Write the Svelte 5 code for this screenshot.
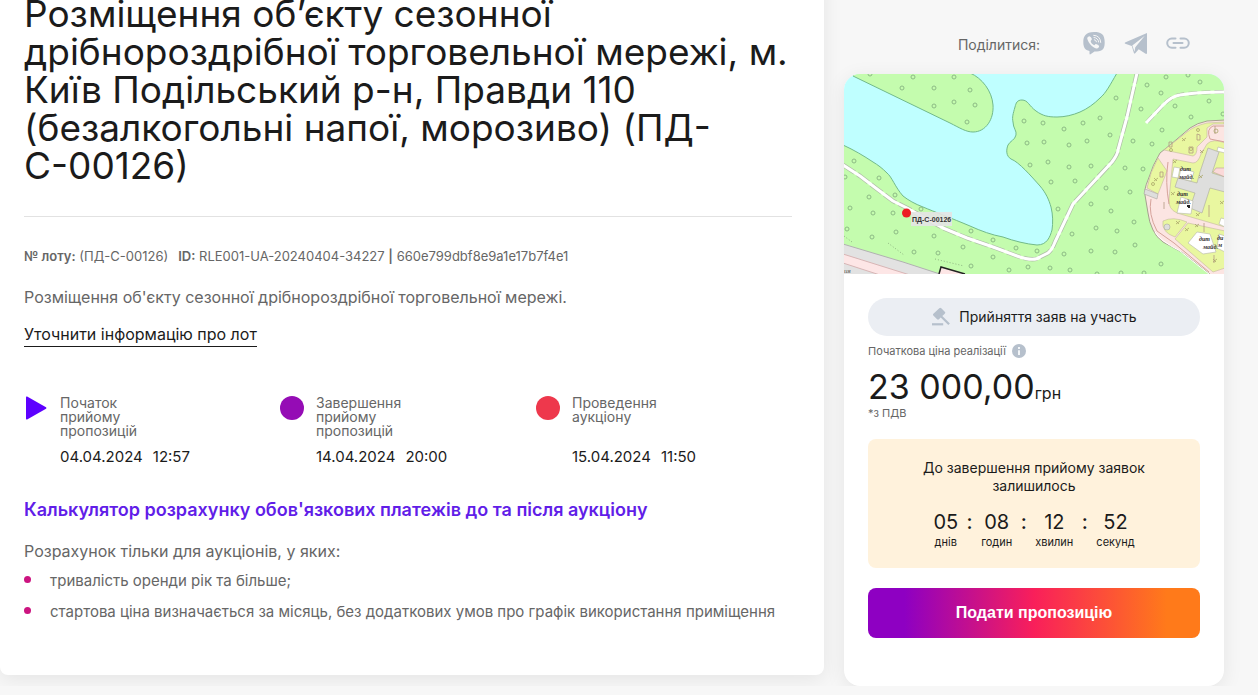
<script>
  const stages = [
    { shape: 'play', color: '#5d00ff', label: 'Початок прийому пропозицій', date: '04.04.2024', time: '12:57' },
    { shape: 'dot', color: '#950cb5', label: 'Завершення прийому пропозицій', date: '14.04.2024', time: '20:00' },
    { shape: 'dot', color: '#ee384c', label: 'Проведення аукціону', date: '15.04.2024', time: '11:50' }
  ];

  const conditions = [
    'тривалість оренди рік та більше;',
    'стартова ціна визначається за місяць, без додаткових умов про графік використання приміщення'
  ];

  const countdown = [
    { value: '05', unit: 'днів' },
    { value: '08', unit: 'годин' },
    { value: '12', unit: 'хвилин' },
    { value: '52', unit: 'секунд' }
  ];

  // Tree symbols on the map, in map units
  const trees = [
    [26, 0], [69, 3], [110, 3], [58, 14], [90, 14], [126, 16], [90, 32], [110, 28], [131, 31], [123, 48],
    [180, 47], [183, 69], [186, 91], [10, 87], [1, 103], [35, 104], [25, 123], [51, 121], [6, 134], [29, 139],
    [49, 139], [77, 135], [3, 155], [28, 163], [52, 158], [90, 162], [127, 157], [149, 166], [119, 173],
    [172, 174], [149, 183], [70, 178], [94, 179], [127, 192], [165, 196], [184, 193], [193, 177],
    [322, 3], [344, 1], [303, 11], [356, 8], [317, 19], [272, 24], [297, 35], [331, 32], [365, 27], [347, 43],
    [379, 40], [256, 44], [199, 49], [239, 49], [220, 55], [318, 56], [266, 61], [243, 67], [200, 68],
    [225, 71], [289, 67], [308, 70], [204, 88], [225, 93], [247, 92], [281, 94], [299, 95], [207, 108],
    [231, 107], [262, 114], [286, 118], [214, 135], [247, 130], [267, 137], [290, 148], [228, 160],
    [252, 154], [273, 157], [291, 171], [220, 180], [247, 177], [271, 178], [317, 190], [206, 194],
    [226, 196], [253, 200], [277, 199], [300, 199]
  ];

  const shrubs = [
    [340, 66], [331, 88], [358, 78], [312, 106], [357, 103], [329, 120], [354, 141], [334, 149],
    [343, 156], [371, 187], [378, 129], [353, 152]
  ];
</script>

<div class="page">
  <main class="lot">
    <h1>Розміщення об’єкту сезонної дрібнороздрібної торговельної мережі, м. Київ Подільський р-н, Правди 110 (безалкогольні напої, морозиво) (ПД-С-00126)</h1>

    <p class="ids">
      <span><b>№ лоту:</b> (ПД-С-00126)</span>
      <span><b>ID:</b> RLE001-UA-20240404-34227 <b>|</b> 660e799dbf8e9a1e17b7f4e1</span>
    </p>
    <p class="summary">Розміщення об'єкту сезонної дрібнороздрібної торговельної мережі.</p>
    <a class="ask" href="#ask">Уточнити інформацію про лот</a>

    <ul class="stages">
      {#each stages as stage}
        <li>
          <svg width="24" height="24" viewBox="0 0 24 24" aria-hidden="true">
            {#if stage.shape === 'play'}
              <path d="M2 1.2Q2 0 3.1.6L22 11.2Q23 12 22 12.8L3.1 23.4Q2 24 2 22.8Z" fill={stage.color} />
            {:else}
              <circle cx="12" cy="12" r="12" fill={stage.color} />
            {/if}
          </svg>
          <div class="stage-text">
            <span class="stage-label">{stage.label}</span>
            <span class="stage-date"><span>{stage.date}</span><span>{stage.time}</span></span>
          </div>
        </li>
      {/each}
    </ul>

    <a class="calculator" href="#calculator">Калькулятор розрахунку обов'язкових платежів до та після аукціону</a>
    <p class="conditions-title">Розрахунок тільки для аукціонів, у яких:</p>
    <ul class="conditions">
      {#each conditions as condition}
        <li>{condition}</li>
      {/each}
    </ul>
  </main>

  <aside>
    <div class="share">
      <span>Поділитися:</span>
      <a href="#viber" aria-label="Viber">
        <svg width="24" height="24" viewBox="0 0 24 24">
          <path d="M12 1C19.500 1 22.700 3.300 22.700 11.500S19 20.500 12.500 20.600L8.500 23.300Q7.500 23.800 7.500 22.500V20.100C3 19 1.300 16.500 1.300 11S3.500 1 12 1Z" fill="#b6c0cc" />
          <path d="M6.300 5.700C7.500 4.600 8.200 5.200 9.400 7.100C10.200 8.300 9.900 8.800 8.800 9.700C8.300 11.100 10.600 13.900 12.500 14.200C13.300 13 14 12.700 15.300 13.600C17.200 14.800 17.600 15.400 16.600 16.600C15.300 18 14.200 17.700 12 16.400C8.800 14.500 6.700 11.900 5.600 8.700C5 7 5.200 6.600 6.300 5.700Z" fill="#f7f7f7" />
          <path d="M11.700 4.300Q18.300 4.600 18.700 11.400M12 6.500Q16.300 6.900 16.600 11M12.300 8.700Q14.300 8.800 14.500 10.800" fill="none" stroke="#f7f7f7" stroke-width="1" stroke-linecap="round" />
        </svg>
      </a>
      <a href="#telegram" aria-label="Telegram">
        <svg width="24" height="24" viewBox="0 0 24 24">
          <path d="M1 11.500L23 2V22Q22.800 23.500 21.200 22.600L14.700 18.300L11.200 22.300Q10.200 23 9.800 21.700L7.800 15L1.300 12.700Q.2 12.200 1 11.500Z" fill="#b6c0cc" />
          <path d="M8.300 14.600L20.800 4.700L11.300 16.300L10.500 20.800Z" fill="#f7f7f7" />
        </svg>
      </a>
      <a href="#copy" aria-label="Копіювати посилання">
        <svg width="24" height="24" viewBox="0 0 24 24" fill="none" stroke="#b6c0cc" stroke-width="2" stroke-linecap="round">
          <path d="M9.500 7.500H5.800a4.600 4.600 0 0 0 0 9.200H9.500M14.500 7.500h3.700a4.600 4.600 0 0 1 0 9.200H14.500M7.500 12.100h9" />
        </svg>
      </a>
    </div>

    <section class="card">
      <svg class="map" viewBox="0 0 380 200" preserveAspectRatio="xMidYMid slice" role="img" aria-label="Розташування лоту на мапі">
        <rect width="380" height="200" fill="#bfffff" />
        <g fill="#c4fcae" stroke="#72b98a" stroke-width="1">
          <path d="M9 -1V2L106 49C116 54 122 58 129 58C142 58 150 45 149 31C148 17 138 4 126 -1Z" />
          <path d="M273 -1C266 11 262 19 256 24C250 30 243 35 236 38C229 41 221 43 213 43C204 43 199 42 192 37C185 32 184 26 178 26C173 26 172 29 171 33C169 40 168 43 169 48C169 54 173 57 172 61C171 66 166 67 164 71C162 76 162 82 167 85C175 88 187 102 196 112C202 119 205 126 207 133C209 141 209 149 208 156C206 163 203 171 193 171C182 170 170 167 159 163C148 161 137 157 126 152C107 144 91 138 79 133C71 130 64 126 59 122C51 113 48 103 43 99C38 94 34 91 29 88C20 82 10 76 -1 71V201H381V-1Z" />
        </g>

        <g fill="none" stroke-linejoin="round">
          <path d="M-1 91L16 102L33 115L49 127L63 134L99 154L123 164L149 173L173 182Q190 188 196 183L204 179Q208 176 211 168L229 130L268 88Q274 80 274 76L283 43L293 -1" stroke="#b0bfa8" stroke-width="4.500" stroke-dasharray="14 3" />
          <path d="M303 48L319 31Q328 22 336 21Q353 18 380 18" stroke="#b0bfa8" stroke-width="4" stroke-dasharray="9 4" />
          <path d="M-1 91L16 102L33 115L49 127L63 134L99 154L123 164L149 173L173 182Q190 188 196 183L204 179Q208 176 211 168L229 130L268 88Q274 80 274 76L283 43L293 -1" stroke="#fff" stroke-width="3" />
          <path d="M302 49L319 31Q328 22 336 21Q353 18 381 18" stroke="#fff" stroke-width="3" />
        </g>

        <g fill="none" stroke="#8dbb85" stroke-width="1">
          {#each trees as [x, y]}
            <circle cx={x} cy={y} r="2" />
          {/each}
        </g>

        <path d="M-1 170L19 176L59 188L99 201H-1Z" fill="#e2e2e2" stroke="#b1b1b1" stroke-width="1" />
        <path d="M-1 180L66 201H36L-1 189Z" fill="#fde6e6" stroke="#d7b5b5" stroke-width="1" />
        <path d="M95 200L97 193L121 200" fill="#fde6e6" stroke="#222" stroke-width="1.500" />
        <path d="M44 169L60 181M91 185L120 192M0 162L8 168" stroke="#8fb582" stroke-width="1" stroke-dasharray="1 2" />
        <text x="0" y="199" class="map-note">ия</text>

        <path d="M381 46L363 47Q353 49 346 54L326 71L316 79Q309 90 304 106Q300 115 301 121L304 139Q305 148 309 156Q312 163 319 168L339 179L367 201H381Z" fill="#fce5e2" stroke="#a5a18f" stroke-width="1" />
        <g fill="#e9f7a0" stroke="#c5b8a0" stroke-width=".6">
          <path d="M380 48L363 49Q350 52 343 58L320 76L349 82Q353 81 353 73L363 63V54L369 50L380 50Z" />
          <path d="M314 84L323 97L314 120L303 114Q306 98 314 84Z" />
          <path d="M329 85L349 89Q354 89 357 80L363 70Q369 64 381 69V153L333 139Q324 135 325 125Z" />
          <path d="M319 147Q329 142 343 148L331 163Q317 158 319 147Z" />
          <path d="M344 149L381 157V194L369 198L331 165Z" />
        </g>
        <path d="M366 65Q362 55 369 52H381M366 65L381 68M307 125Q304 140 313 157L330 169L365 198M324 88Q321 108 325 130" fill="none" stroke="#d5a29a" stroke-width="1" />
        <path d="M311 158Q315 166 336 177L365 200" fill="none" stroke="#fff" stroke-width="1" />
        <g fill="#dededd" stroke="#aaa8a0" stroke-width=".6">
          <path d="M364 74L375 78L368 99L381 103V118L366 114L358 139L346 134L351 119L331 113L334 104L353 109L356 98Z" />
          <path d="M301 115L314 120L313 125L300 120Z" />
          <circle cx="323" cy="153" r="3" />
        </g>
        <path d="M372 94H381V103L369 98Z" fill="#fbd9d9" stroke="#b8a09a" stroke-width=".6" />
        <g fill="#fff" stroke="#b5b5aa" stroke-width=".6">
          <path d="M330 93L336 94L334 104L328 103Z" />
          <path d="M337 94L350 98L347 107L335 104Z" />
          <path d="M337 123L349 127L347 140L333 139Z" />
          <path d="M353 158L366 160L372 178L359 180L344 169Z" />
          <path d="M375 160L381 162V178L373 174Z" />
          <path d="M374 73L381 75V79L373 77Z" />
          <path d="M377 144L381 145V153L375 150Z" />
        </g>
        <path d="M343 131h3v3h-2v-1h-1z" fill="#222" />
        <g fill="none" stroke="#a9a66a" stroke-width=".8">
          {#each shrubs as [x, y]}
            <path d="M{x - 2} {y - 2}l3 3M{x + 2} {y - 2}l-4 3" />
          {/each}
          <path d="M353 60v6h3v-5zM325 68v5h3v-5zM345 73v6h4v-6zM371 52v8M316 98v5h3v-5zM320 128v7M370 181v8M360 149v9M365 131v12" stroke="#b29a84" />
          <circle cx="354" cy="56" r="1.500" />
          <circle cx="327" cy="76" r="1.500" />
          <circle cx="347" cy="75" r="1.500" />
          <circle cx="309" cy="110" r="1.500" />
          <circle cx="372" cy="57" r="2" />
        </g>
        <g class="map-label">
          <text x="336" y="97">дит</text>
          <text x="335" y="105">майд.</text>
          <text x="333" y="122">дит</text>
          <text x="332" y="130">майд.</text>
          <text x="355" y="167">дит</text>
          <text x="359" y="175">майд.</text>
          <text x="373" y="166">ди</text>
          <text x="374" y="173">м</text>
        </g>

        <rect x="67" y="138" width="41" height="14" fill="#e4e4e4" opacity=".9" />
        <circle cx="62.500" cy="139" r="4.500" fill="#ed1c24" />
        <text x="68" y="148" class="map-pin">ПД-С-00126</text>
      </svg>

      <div class="body">
        <div class="status">
          <svg width="20" height="20" viewBox="0 0 20 20" fill="#b6c0cc" aria-hidden="true">
            <path d="M1 16.200h11.200v2.200H1z" />
            <path d="M8.300 1.200Q9.300.2 10.300 1.200L14 4.900Q14.800 5.800 13.900 6.600L13 7.400L11.300 9L18.900 16.400L17.300 18L9.700 10.600L8 12.200Q7 13.100 6.100 12.200L2.300 8.500Q1.500 7.600 2.400 6.800Z" />
          </svg>
          <span>Прийняття заяв на участь</span>
        </div>

        <div class="price-label">
          <span>Початкова ціна реалізації</span>
          <svg width="14" height="14" viewBox="0 0 14 14" aria-hidden="true">
            <circle cx="7" cy="7" r="7" fill="#b6c0cc" />
            <path d="M6 6.200h2V11H6zM6 3h2v2H6z" fill="#f2f5f8" />
          </svg>
        </div>
        <div class="price"><span class="amount">23 000,00</span><span class="currency">грн</span></div>
        <div class="vat">*з ПДВ</div>

        <div class="timer">
          <p>До завершення прийому заявок залишилось</p>
          <div class="clock">
            {#each countdown as part, i}
              {#if i > 0}<span class="colon">:</span>{/if}
              <div class="part"><span class="value">{part.value}</span><span class="unit">{part.unit}</span></div>
            {/each}
          </div>
        </div>

        <button type="button">Подати пропозицію</button>
      </div>
    </section>
  </aside>
</div>

<style>
  :global(body) {
    margin: 0;
    background: #f7f7f7;
  }
  .page {
    display: grid;
    grid-template-columns: minmax(0, 1fr) 380px;
    gap: 20px;
    align-items: start;
    padding-right: 34px;
    overflow: hidden;
    font-family: Inter, 'Noto Sans', sans-serif;
    color: #1b1b1b;
  }
  p, h1, ul {
    margin: 0;
    padding: 0;
  }
  ul {
    list-style: none;
  }
  .lot {
    margin-top: -25px;
    padding: 20px 32px 52px 24px;
    background: #fff;
    border-radius: 8px;
    box-shadow: 0 4px 20px rgba(0, 0, 0, 0.08);
  }
  h1 {
    padding-bottom: 31px;
    border-bottom: 1px solid #e2e2e2;
    font-size: 37px;
    line-height: 38px;
    font-weight: 400;
  }
  .ids {
    display: flex;
    flex-wrap: wrap;
    gap: 10px;
    margin-top: 31px;
    font-size: 13px;
    line-height: 16px;
    color: #666;
  }
  .ids b {
    font-weight: 600;
  }
  .summary {
    margin-top: 22px;
    font-size: 16px;
    line-height: 22px;
    color: #666;
  }
  .ask {
    display: inline-block;
    margin-top: 15px;
    padding-bottom: 1px;
    border-bottom: 1px solid #1b1b1b;
    font-size: 16px;
    line-height: 22px;
    color: inherit;
    text-decoration: none;
  }
  .stages {
    display: grid;
    grid-template-columns: repeat(3, 1fr);
    margin-top: 49px;
  }
  .stages li {
    display: flex;
    gap: 12px;
  }
  .stages svg {
    flex: none;
  }
  .stage-text {
    display: flex;
    flex-direction: column;
    justify-content: space-between;
    gap: 9px;
  }
  .stage-label {
    max-width: 100px;
    font-size: 14px;
    line-height: 14px;
    color: #666;
  }
  .stage-date {
    display: flex;
    gap: 10px;
    font-size: 15px;
    line-height: 20px;
  }
  .calculator {
    display: block;
    margin-top: 31px;
    font-size: 18px;
    line-height: 24px;
    font-weight: 600;
    color: #611de8;
    text-decoration: none;
  }
  .conditions-title {
    margin-top: 17px;
    font-size: 16px;
    line-height: 24px;
    color: #666;
  }
  .conditions {
    display: grid;
    gap: 9px;
    margin-top: 7px;
    font-size: 15px;
    line-height: 22px;
    color: #666;
  }
  .conditions li {
    display: flex;
    gap: 19px;
  }
  .conditions li::before {
    content: '';
    flex: none;
    width: 7px;
    height: 7px;
    margin-top: 6px;
    border-radius: 50%;
    background: #cc1480;
  }
  .share {
    display: flex;
    justify-content: flex-end;
    align-items: center;
    padding: 31px 34px 19px 0;
  }
  .share span {
    padding-top: 4px;
    margin-right: 24px;
    font-size: 14px;
    line-height: 20px;
    color: #666;
  }
  .share a {
    display: flex;
    margin-left: 18px;
  }
  .card {
    overflow: hidden;
    border-radius: 16px;
    background: #fff;
    box-shadow: 0 4px 20px rgba(0, 0, 0, 0.08);
  }
  .map {
    display: block;
    width: 100%;
    height: 200px;
  }
  .map-pin {
    font: bold 7px 'Liberation Sans', sans-serif;
    fill: #333;
  }
  .map-label {
    font: italic bold 6px 'Liberation Serif', serif;
    fill: #333;
  }
  .map-note {
    font: italic 7px 'Liberation Serif', serif;
    fill: #555;
  }
  .body {
    padding: 24px 24px 48px;
  }
  .status {
    display: flex;
    justify-content: center;
    align-items: center;
    gap: 8px;
    min-height: 38px;
    border-radius: 19px;
    background: #ebeef3;
    font-size: 14px;
    line-height: 18px;
  }
  .price-label {
    display: flex;
    align-items: center;
    gap: 6px;
    margin-top: 7px;
    font-size: 11px;
    line-height: 16px;
    color: #666;
  }
  .price {
    display: flex;
    align-items: baseline;
    margin-top: 10px;
    line-height: 36px;
  }
  .amount {
    font-size: 34px;
  }
  .currency {
    font-size: 16px;
    line-height: 16px;
  }
  .vat {
    font-size: 11px;
    line-height: 16px;
    color: #666;
  }
  .timer {
    display: flex;
    flex-direction: column;
    align-items: center;
    margin-top: 18px;
    padding: 20px 32px 18px;
    border-radius: 8px;
    background: #fff2dc;
    text-align: center;
  }
  .timer p {
    max-width: 230px;
    font-size: 14px;
    line-height: 18px;
  }
  .clock {
    display: flex;
    margin-top: 15px;
  }
  .part {
    display: flex;
    flex-direction: column;
    align-items: center;
  }
  .value {
    font-size: 20px;
    line-height: 24px;
  }
  .unit {
    font-size: 11px;
    line-height: 16px;
  }
  .colon {
    width: 23px;
    font-size: 20px;
    line-height: 24px;
    font-weight: 500;
  }
  button {
    display: block;
    width: 100%;
    margin-top: 20px;
    padding: 14px;
    border: 0;
    border-radius: 8px;
    background: linear-gradient(90deg, #8e00c2 11%, #f91f5a 50%, #ff7a1a 90%);
    font: bold 16px/22px 'Liberation Sans', sans-serif;
    color: #fff;
  }
</style>
